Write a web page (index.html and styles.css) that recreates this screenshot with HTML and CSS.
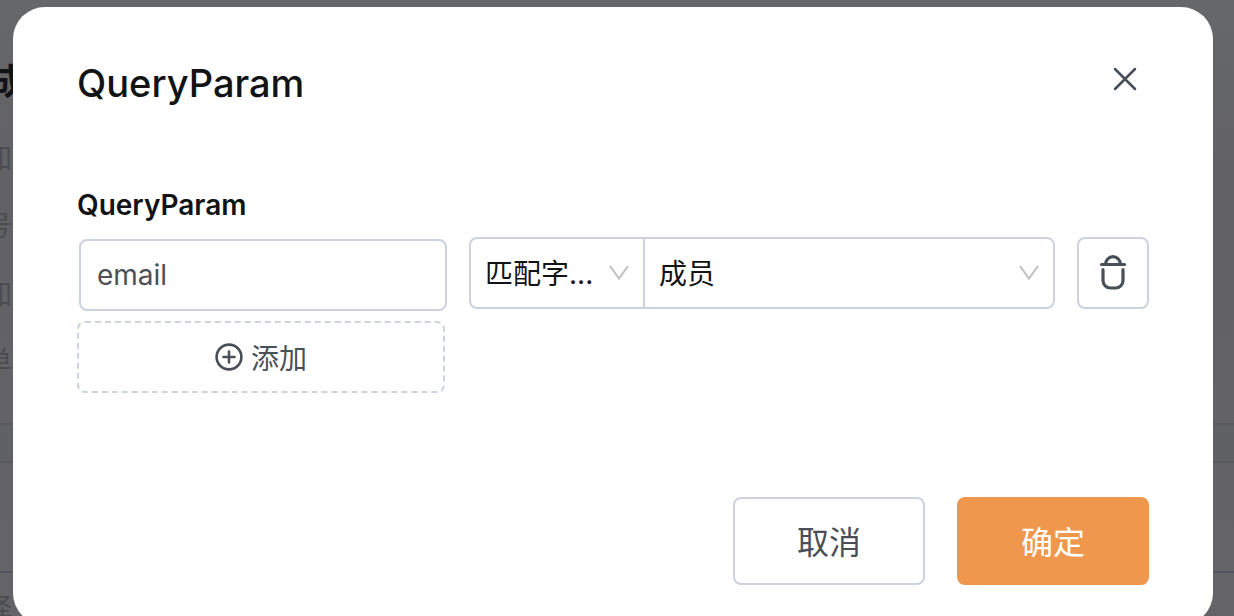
FILE: index.html
```html
<!DOCTYPE html>
<html lang="zh-CN">
<head>
    <meta charset="UTF-8">
    <meta name="viewport" content="width=device-width, initial-scale=1.0">
    <title>QueryParam</title>
    <link rel="stylesheet" href="styles.css">
</head>
<body>
    <div class="page">
        <div class="side">
            <p class="side-title">成</p>
            <p class="side-item">加</p>
            <p class="side-item">号</p>
            <p class="side-item">加</p>
            <p class="side-item">单</p>
        </div>
        <div class="band"></div>
        <div class="panel"></div>
        <div class="side last">
            <p class="side-item">择</p>
        </div>
    </div>

    <div class="mask">
        <form class="modal" role="dialog" aria-labelledby="modal-title">
            <div class="modal-header">
                <h1 class="modal-title" id="modal-title">QueryParam</h1>
                <button type="button" class="close" aria-label="关闭">
                    <svg width="24" height="24" viewBox="0 0 24 24" fill="none" stroke="currentColor" stroke-width="2.5" stroke-linecap="round">
                        <path d="M2 2l20 20M22 2L2 22"/>
                    </svg>
                </button>
            </div>

            <label class="label" for="param-name">QueryParam</label>
            <div class="row">
                <div class="name">
                    <input class="input" id="param-name" type="text" value="email">
                </div>
                <div class="group">
                    <div class="select type">
                        <select aria-label="类型">
                            <option>匹配字...</option>
                        </select>
                        <svg class="arrow" width="20" height="16" viewBox="0 0 20 16" fill="none" stroke="currentColor" stroke-width="2">
                            <path d="M1 1l9 12.5L19 1"/>
                        </svg>
                    </div>
                    <div class="select field">
                        <select aria-label="字段">
                            <option>成员</option>
                        </select>
                        <svg class="arrow" width="20" height="16" viewBox="0 0 20 16" fill="none" stroke="currentColor" stroke-width="2">
                            <path d="M1 1l9 12.5L19 1"/>
                        </svg>
                    </div>
                </div>
                <button type="button" class="delete" aria-label="删除">
                    <svg width="28" height="36" viewBox="0 0 28 36" fill="none" stroke="currentColor" stroke-width="3.2" stroke-linecap="round">
                        <path d="M2.5 9.5h23"/>
                        <path d="M6.7 9a7.3 7.3 0 0 1 14.6 0"/>
                        <path d="M4 14.700V25.500a7.500 7.500 0 0 0 7.500 7.500h5a7.500 7.500 0 0 0 7.500-7.500V14.700"/>
                    </svg>
                </button>
                <button type="button" class="add">
                    <svg width="28" height="28" viewBox="0 0 28 28" fill="none" stroke="currentColor" stroke-width="2.6" stroke-linecap="round">
                        <circle cx="14" cy="14" r="12.4"/>
                        <path d="M14 8.5v11M8.5 14h11"/>
                    </svg>
                    <span>添加</span>
                </button>
            </div>

            <div class="modal-footer">
                <button type="button" class="btn">取消</button>
                <button type="submit" class="btn primary">确定</button>
            </div>
        </form>
    </div>
</body>
</html>
```
FILE: styles.css
```css
*{
    box-sizing: border-box;
}
body{
    margin: 0;
    height: 100vh;
    overflow: hidden;
    font-family: Inter, "Noto Sans CJK SC", sans-serif;
    font-size: 28px;
    color: #121315;
}
button, input, select{
    font: inherit;
    color: inherit;
    margin: 0;
}
button{
    cursor: pointer;
}
svg{
    display: block;
    flex: none;
}

/* page under the mask */
.page{
    height: 100vh;
    overflow: hidden;
    background: linear-gradient(#666768, #626266 30%, #646468);
}
.side{
    display: flex;
    flex-direction: column;
    align-items: flex-end;
    width: 12px;
    height: 423px;
    padding-top: 58px;
}
.side-title{
    margin: 0 -14px 28px 0;
    font-size: 36px;
    font-weight: 700;
    line-height: 48px;
    color: #121317;
}
.side-item{
    margin: 0 0 20px;
    line-height: 48px;
    color: #4b4c50;
}
.band{
    height: 40px;
    background: #606165;
    border-top: 2px solid #5a5a5e;
    border-bottom: 2px solid #5a5a5e;
}
.panel{
    height: 110px;
    border-bottom: 2px solid #52555d;
}
.last{
    padding-top: 12px;
}

/* modal */
.mask{
    position: absolute;
    inset: 0;
    overflow: hidden;
}
.modal{
    margin: 7px 21px 0 13px;
    padding: 48px 64px 40px;
    border-radius: 32px;
    background: #fff;
}
.modal-header{
    display: flex;
    align-items: flex-start;
    justify-content: space-between;
    margin-bottom: 74px;
}
.modal-title{
    margin: 0;
    font-size: 38px;
    font-weight: 500;
    line-height: 56px;
}
.close{
    display: flex;
    padding: 12px;
    border: none;
    background: none;
    color: #474e57;
}
.label{
    display: block;
    margin-bottom: 12px;
    font-weight: 600;
    line-height: 40px;
}
.row{
    display: grid;
    grid-template-columns: 370fr 586fr 72px;
    gap: 10px 22px;
    align-items: start;
}
.name{
    padding: 2px 0 0 2px;
}
.input{
    display: block;
    width: 100%;
    height: 72px;
    padding: 0 16px;
    border: 2px solid #ccd2e0;
    border-radius: 8px;
    background: #fff;
    color: #4c5057;
}
.group{
    display: flex;
    height: 72px;
    border: 2px solid #ccd2e0;
    border-radius: 8px;
}
.select{
    display: grid;
    align-items: center;
}
.select select,
.select .arrow{
    grid-area: 1 / 1;
}
.select select{
    appearance: none;
    width: 100%;
    height: 68px;
    padding: 2px 40px 0 14px;
    border: none;
    background: none;
}
.type{
    flex: none;
    width: 174px;
    border-right: 2px solid #ccd2e0;
}
.field{
    flex: 1;
}
.arrow{
    justify-self: end;
    margin-right: 14px;
    color: #bfbfbf;
    pointer-events: none;
}
.delete,
.add{
    display: flex;
    align-items: center;
    justify-content: center;
    height: 72px;
    padding: 0;
    border: 2px solid #ccd2e0;
    border-radius: 8px;
    background: #fff;
    color: #4a5058;
}
.add{
    gap: 8px;
    margin-right: 2px;
    border-style: dashed;
}
.modal-footer{
    display: flex;
    justify-content: flex-end;
    gap: 32px;
    margin-top: 104px;
}
.btn{
    width: 192px;
    height: 88px;
    padding: 0 0 2px;
    border: 2px solid #ccd2e0;
    border-radius: 8px;
    background: #fff;
    font-size: 32px;
    color: #4a4e57;
}
.primary{
    border-color: #ef984d;
    background: #ef984d;
    color: #fff;
}
```
